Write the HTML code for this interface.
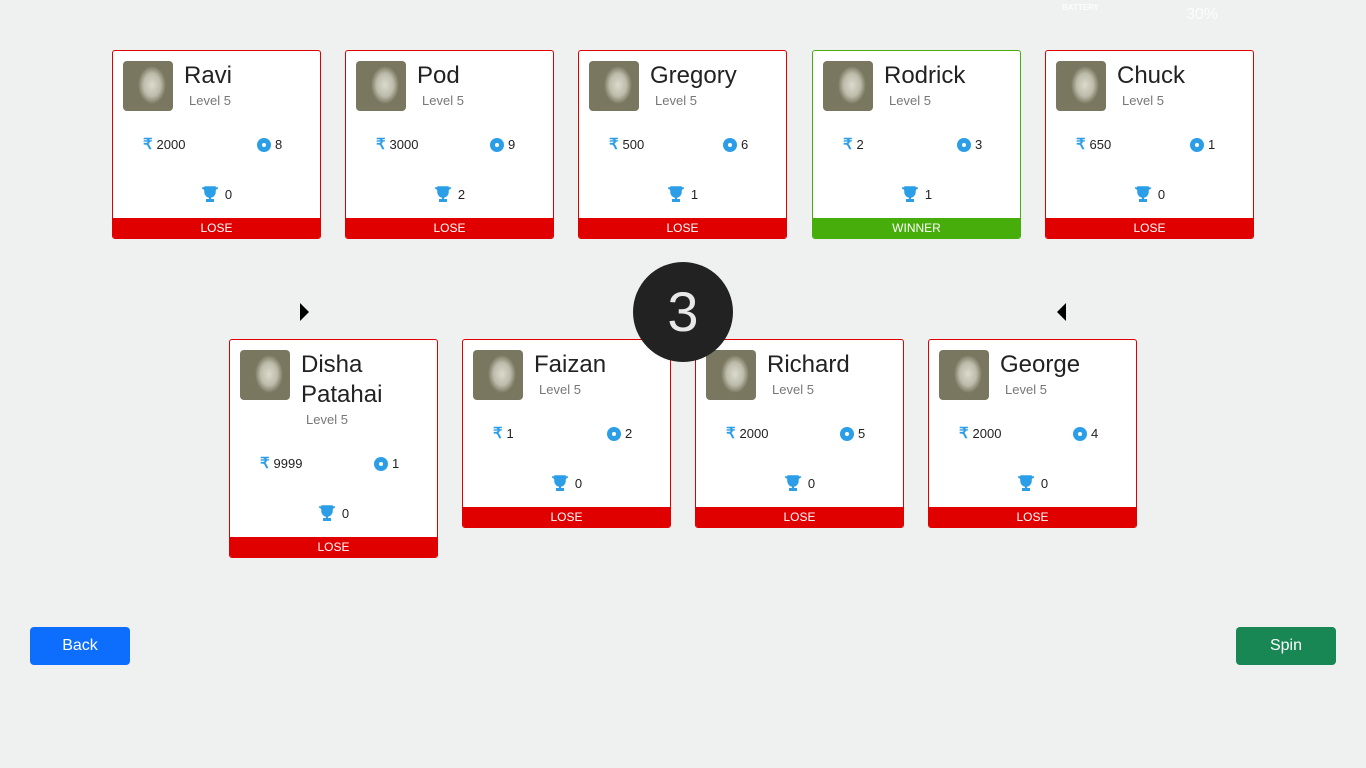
<!DOCTYPE html>
<html><head><meta charset="utf-8"><style>
body{margin:0;width:1366px;height:768px;background:#eff0f0;font-family:"Liberation Sans",sans-serif;position:relative;overflow:hidden}
.card{position:absolute;width:207px;background:#fff;border:1px solid #e00000;border-radius:3px;overflow:hidden}
.card.win{border-color:#46ad0b}
.hd{padding:10px 10px 0;display:flex}
.av{width:50px;height:50px;border-radius:4px;flex:none;background:radial-gradient(ellipse 14px 19px at 58% 48%,#dcdacc 0,#bdbbaa 60%,#7a7760 100%),#6d6a55}
.nm{margin-left:11px}
.nm .n{font-size:24px;line-height:30px;color:#222}
.nm .l{font-size:13px;line-height:20px;color:#777;margin-left:5px}
.st{margin-top:24px;height:20px;position:relative;font-size:13px;color:#222}
.st span{position:absolute;top:0;height:20px;line-height:20px;display:flex;align-items:center;gap:4px}
.rs{color:#2c9ee8;font-weight:bold;font-size:15px;line-height:20px}
.coin{width:14px;height:14px;border-radius:50%;background:#2c9ee8;position:relative}
.coin:after{content:"";position:absolute;left:5px;top:5px;width:4px;height:4px;border-radius:50%;background:#fff}
.tr{margin-top:29px;height:20px;display:flex;justify-content:center;align-items:center;gap:6px;font-size:13px;color:#222}
.ft{margin-top:14px;height:20px;line-height:20px;background:#e00000;color:#fff;text-align:center;font-size:12px}
.win .ft{background:#46ad0b}
.btn{position:absolute;top:627px;width:100px;height:38px;border-radius:4px;color:#fff;font-size:16px;text-align:center;line-height:38px}
</style></head><body>
<div style="position:absolute;left:1062px;top:3px;font-size:8px;color:#fff;opacity:.8;font-weight:bold">BATTERY</div>
<div style="position:absolute;left:1186px;top:6px;font-size:16px;color:#fff;opacity:.8">30%</div>

<script>
const T='<svg width="18" height="16" viewBox="0 0 18 16"><path d="M4 1h10v5a5 5 0 0 1-10 0z M1 2h3v2a2 2 0 0 0 1 2 M17 2h-3v2a2 2 0 0 1-1 2" fill="#2c9ee8" stroke="#2c9ee8" stroke-width="1.5"/><rect x="8" y="10" width="2" height="3" fill="#2c9ee8"/><rect x="5" y="13" width="8" height="3" fill="#2c9ee8"/></svg>';
const d=[[112,50,'Ravi','2000','8','0','LOSE'],[345,50,'Pod','3000','9','2','LOSE'],[578,50,'Gregory','500','6','1','LOSE'],[812,50,'Rodrick','2','3','1','WINNER'],[1045,50,'Chuck','650','1','0','LOSE'],
[229,339,'Disha<br>Patahai','9999','1','0','LOSE'],[462,339,'Faizan','1','2','0','LOSE'],[695,339,'Richard','2000','5','0','LOSE'],[928,339,'George','2000','4','0','LOSE']];
for(const c of d){document.write(`<div class="card${c[6]=='WINNER'?' win':''}" style="left:${c[0]}px;top:${c[1]}px"><div class="hd"><div class="av"></div><div class="nm"><div class="n">${c[2]}</div><div class="l">Level 5</div></div></div><div class="st"><span style="left:30px"><b class="rs">₹</b>${c[3]}</span><span style="left:144px"><i class="coin"></i>${c[4]}</span></div><div class="tr">${T}${c[5]}</div><div class="ft">${c[6]}</div></div>`)}
</script>
<div style="position:absolute;left:300px;top:303px;width:0;height:0;border-top:9px solid transparent;border-bottom:9px solid transparent;border-left:9px solid #000"></div>
<div style="position:absolute;left:1057px;top:303px;width:0;height:0;border-top:9px solid transparent;border-bottom:9px solid transparent;border-right:9px solid #000"></div>
<div style="position:absolute;left:633px;top:262px;width:100px;height:100px;border-radius:50%;background:#222;color:#e8e8e8;font-size:56px;line-height:100px;text-align:center">3</div>
<div class="btn" style="left:30px;background:#0d6efd">Back</div>
<div class="btn" style="left:1236px;background:#198754">Spin</div>
</body></html>
